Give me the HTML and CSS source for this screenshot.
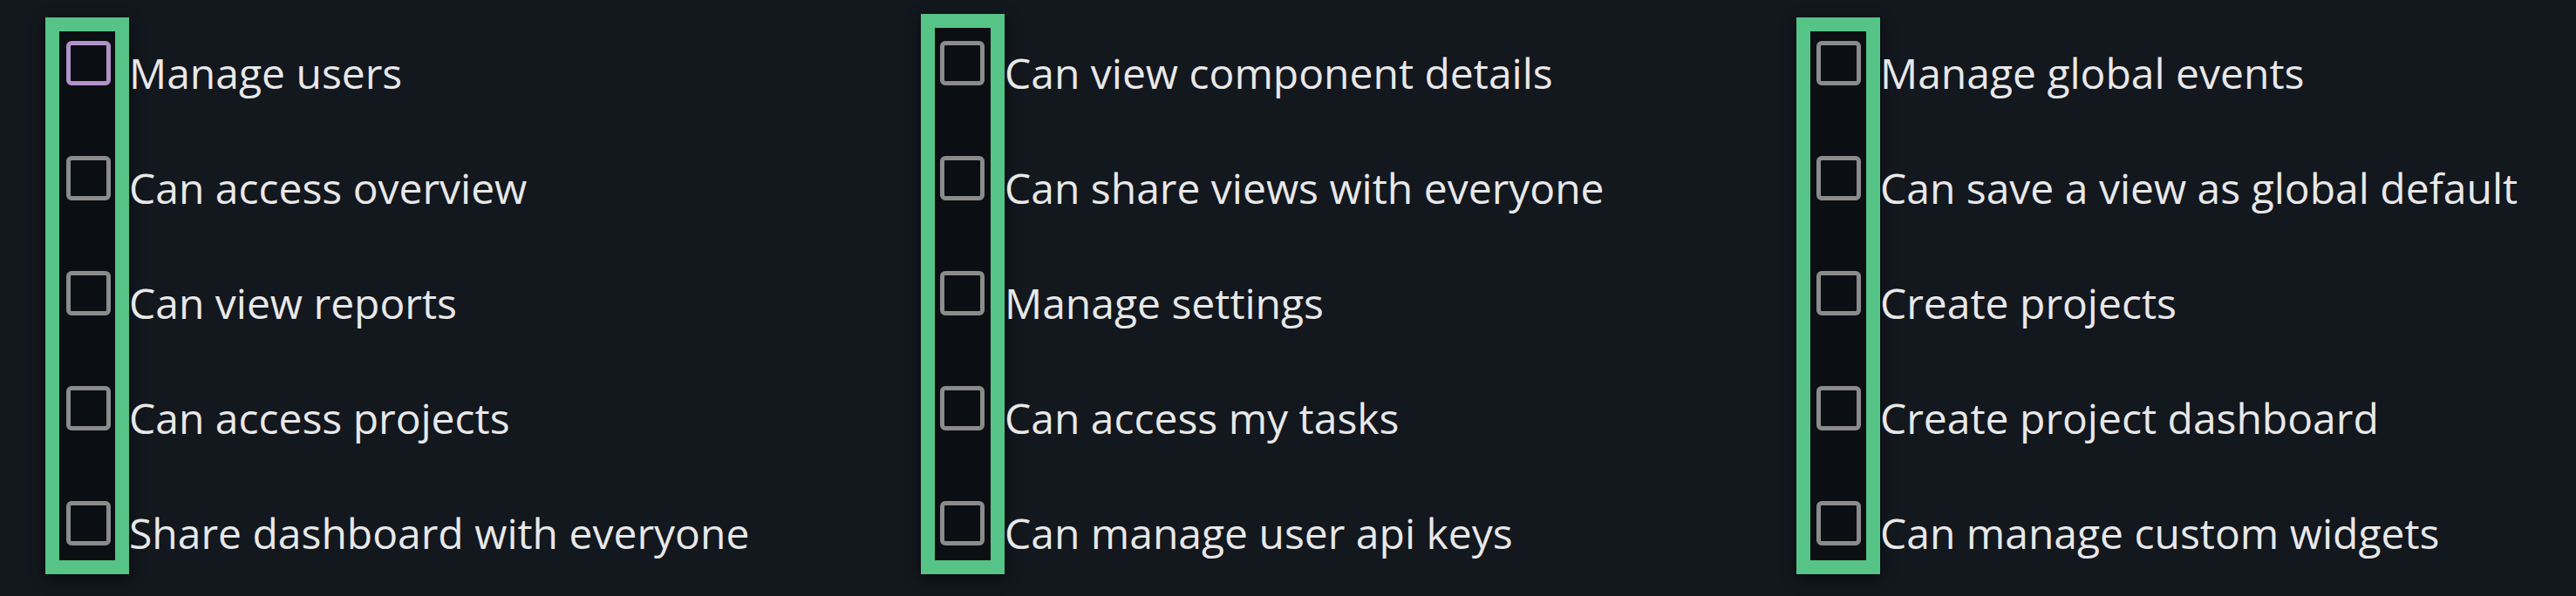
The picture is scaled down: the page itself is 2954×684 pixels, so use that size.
FILE: index.html
```html
<!DOCTYPE html>
<html lang="en">
<head>
<meta charset="utf-8">
<title>Permissions</title>
<link rel="stylesheet" href="styles.css">
</head>
<body>
<main class="board">
  <section class="group">
    <div class="checks">
      <span class="box box-focus"></span>
      <span class="box"></span>
      <span class="box"></span>
      <span class="box"></span>
      <span class="box"></span>
    </div>
    <ul class="labels">
      <li>Manage users</li>
      <li>Can access overview</li>
      <li>Can view reports</li>
      <li>Can access projects</li>
      <li>Share dashboard with everyone</li>
    </ul>
  </section>
  <section class="group group-mid">
    <div class="checks">
      <span class="box"></span>
      <span class="box"></span>
      <span class="box"></span>
      <span class="box"></span>
      <span class="box"></span>
    </div>
    <ul class="labels">
      <li>Can view component details</li>
      <li>Can share views with everyone</li>
      <li>Manage settings</li>
      <li>Can access my tasks</li>
      <li>Can manage user api keys</li>
    </ul>
  </section>
  <section class="group group-last">
    <div class="checks">
      <span class="box"></span>
      <span class="box"></span>
      <span class="box"></span>
      <span class="box"></span>
      <span class="box"></span>
    </div>
    <ul class="labels">
      <li>Manage global events</li>
      <li>Can save a view as global default</li>
      <li>Create projects</li>
      <li>Create project dashboard</li>
      <li>Can manage custom widgets</li>
    </ul>
  </section>
</main>
</body>
</html>
```

FILE: styles.css
```css
html, body {
  margin: 0;
  padding: 0;
  background: #13171e;
}

body {
  font-family: "Open Sans", "Noto Sans", sans-serif;
  color: #e8e8e8;
}

.board {
  display: grid;
  grid-template-columns: repeat(3, 1004px);
  padding: 20px 0 0 52px;
}

.group {
  display: flex;
  align-items: flex-start;
}

.checks {
  display: flex;
  flex-direction: column;
  gap: 81px;
  width: 64px;
  box-sizing: content-box;
  border: 16px solid #55c486;
  background: #0b0e12;
  padding: 11px 0 17px 0;
  box-shadow: 0 4px 14px rgba(0, 0, 0, 0.55);
}

.box {
  display: block;
  width: 51px;
  height: 51px;
  box-sizing: border-box;
  margin-left: 8px;
  border: 5px solid #8b8b8b;
  border-radius: 6px;
}

.box-focus {
  border-color: #b292c8;
}

.labels {
  list-style: none;
  margin: 0;
  padding: 31px 0 0 0;
  display: flex;
  flex-direction: column;
}

.labels li {
  height: 132px;
  font-size: 48px;
  line-height: 65px;
  white-space: nowrap;
}

.group-mid {
  margin-top: -4px;
}

.group-mid .checks {
  padding-top: 15px;
}

.group-mid .box {
  margin-left: 6px;
}

.group-mid .labels {
  padding-top: 35px;
}

.group-last .box {
  margin-left: 7px;
}
```
